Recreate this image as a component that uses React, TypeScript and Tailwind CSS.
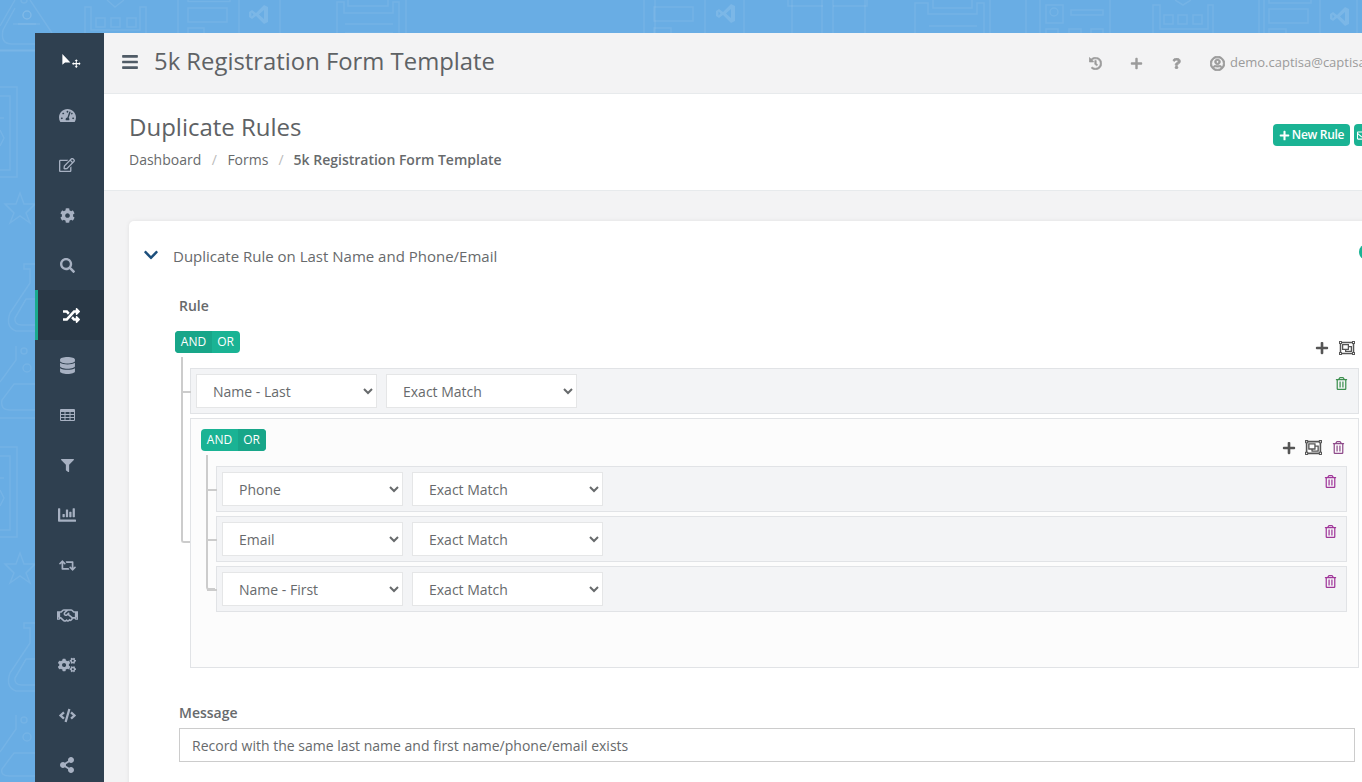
import {
  FaBars,
  FaChartBar,
  FaChevronDown,
  FaCode,
  FaCog,
  FaCogs,
  FaDatabase,
  FaFilter,
  FaHistory,
  FaPlus,
  FaQuestion,
  FaRandom,
  FaRegEdit,
  FaRegEnvelope,
  FaRegHandshake,
  FaRegObjectGroup,
  FaRegTrashAlt,
  FaRegUserCircle,
  FaRetweet,
  FaSearch,
  FaShareAlt,
  FaTachometerAlt,
} from 'react-icons/fa'

function TableIcon({ size }: { size: number }) {
  return (
    <svg width={size} height={size - 3} viewBox="0 0 15 12" fill="currentColor">
      <path
        fillRule="evenodd"
        d="M1 0 H14 Q15 0 15 1 V11 Q15 12 14 12 H1 Q0 12 0 11 V1 Q0 0 1 0 Z M1 3 V5 H4.5 V3 Z M5.5 3 V5 H9.5 V3 Z M10.5 3 V5 H14 V3 Z M1 6 V8 H4.5 V6 Z M5.5 6 V8 H9.5 V6 Z M10.5 6 V8 H14 V6 Z M1 9 V11 H4.5 V9 Z M5.5 9 V11 H9.5 V9 Z M10.5 9 V11 H14 V9 Z"
      />
    </svg>
  )
}

const navIcons = [
  { icon: FaTachometerAlt, size: 17 },
  { icon: FaRegEdit, size: 16 },
  { icon: FaCog, size: 15 },
  { icon: FaSearch, size: 15 },
  { icon: FaRandom, size: 17, active: true },
  { icon: FaDatabase, size: 17 },
  { icon: TableIcon, size: 15 },
  { icon: FaFilter, size: 13 },
  { icon: FaChartBar, size: 18 },
  { icon: FaRetweet, size: 17 },
  { icon: FaRegHandshake, size: 21 },
  { icon: FaCogs, size: 18 },
  { icon: FaCode, size: 17 },
  { icon: FaShareAlt, size: 16 },
]

function VsLogo({ x, y }: { x: number; y: number }) {
  return (
    <path
      transform={`translate(${x} ${y})`}
      fillRule="evenodd"
      d="M0 7 L3 5 L7 8 L15 0 L19 2 V17 L15 19 L7 11 L3 14 L0 12 Z M15 5 L10 9.5 L15 14 Z M2.5 7.5 V11.5 L4.5 9.5 Z"
    />
  )
}

function Backdrop() {
  return (
    <svg className="absolute inset-0" width="1362" height="782" fill="none" stroke="#ffffff" strokeOpacity="0.08" strokeWidth="1.5">
      {/* top strip */}
      <path d="M15 0 L0 26 M30 0 L52 33 M13 24 H40 M0 50 H40" />
      <circle cx="27" cy="15" r="4" />
      <circle cx="24" cy="0" r="3" />
      <path d="M85 33 V7 H91 V30 H140 V7 H146 V33" />
      <rect x="96" y="18" width="9" height="9" />
      <rect x="111" y="18" width="9" height="9" />
      <rect x="127" y="18" width="9" height="9" />
      <path d="M107 0 L115 7 L124 0" />
      <path d="M178 0 V33 M239 0 V33 M280 0 V33" />
      <path d="M188 0 V1.5 H230 V0" />
      <rect x="188" y="8" width="39" height="14" />
      <path d="M188 33 V28 H204 V33" />
      <path d="M337 33 V2 H344 V13 H393 V2 H399 V33 M406 0 V33" />
      <path d="M348 0 V6 H388 V0" />
      <path d="M345 24 H393 M345 33 H393" />
      <path d="M644 0 V33 M655 0 V33 M705 0 V33 M744 0 V33" />
      <rect x="654" y="7" width="39" height="14" />
      <path d="M654 33 V28 H671 V33" />
      <path d="M792 0 V33 M822 0 V33 M833 0 V33 M865 0 V33" />
      <path d="M788 0 V6 H823 M833 6 H867 V0" />
      <path d="M915 33 V3 H928 V14 H977 V3 H984 V33 M990 0 V33" />
      <path d="M933 0 V8 H972 V0" />
      <path d="M929 26 H977" />
      <path d="M1026 0 V33 M1040 0 V33 M1110 0 V33" />
      <rect x="1046" y="5" width="17" height="18" />
      <circle cx="1054" cy="12" r="4" />
      <rect x="1071" y="10" width="32" height="5" />
      <path d="M1046 33 V29 H1058 V33 M1069 33 V29 H1081 V33 M1091 33 V29 H1103 V33" />
      <path d="M1153 33 V5 H1160 V29 H1208 V5 H1213 V33" />
      <rect x="1164" y="15" width="9" height="9" />
      <rect x="1178" y="15" width="9" height="9" />
      <rect x="1193" y="15" width="9" height="9" />
      <path d="M1175 0 L1183 5 L1191 0" />
      <path d="M1259 0 V33 M1264 0 V33 M1320 0 V33 M1357 0 V33" />
      <path d="M1269 0 V3 H1311 V0" />
      <rect x="1269" y="9" width="39" height="14" />
      <path d="M1269 33 V29 H1286 V33" />
      {/* left strip */}
      <path d="M15 8 L3 30 Q0 44 12 44 H36 M0 51 H36 M18 24 H36" />
      <circle cx="27" cy="15" r="4" />
      <path d="M0 87 H17 V177 H0 M0 96 H10 V170 H0 M0 118 H4 M0 130 L4 138 L0 146" />
      <path d="M20 193 L24 204 H35 L26 213 L30 223 L20 216 L10 223 L14 213 L5 204 H16 Z" />
      <path d="M36 264 H24 V269 H30 V283 L10 313 Q5 327 16 331 H36 M36 299 H26 L15 318 Q14 325 22 325 H36" />
      <circle cx="24" cy="351" r="3" />
      <circle cx="27" cy="368" r="4" />
      <path d="M16 346 V360 L0 382 M36 384 H14 L2 400 Q0 410 10 410 H36 M0 418 H36" />
      <path d="M0 447 H17 V537 H0 M0 456 H10 V530 H0 M0 478 H4 M0 490 L4 498 L0 506" />
      <path d="M20 553 L24 564 H35 L26 573 L30 583 L20 576 L10 583 L14 573 L5 564 H16 Z" />
      <path d="M36 623 H24 V628 H30 V643 L10 673 Q5 687 16 691 H36 M36 659 H26 L15 678 Q14 685 22 685 H36" />
      <circle cx="24" cy="720" r="3" />
      <circle cx="27" cy="737" r="4" />
      <path d="M16 715 V729 L0 752 M36 753 H14 L2 769 Q0 776 10 776 H36" />
      {/* code logos */}
      <g fill="#ffffff" fillOpacity="0.12" stroke="none">
        <VsLogo x={249} y={5} />
        <VsLogo x={716} y={4} />
        <VsLogo x={1330} y={7} />
      </g>
    </svg>
  )
}

function Logo() {
  return (
    <svg width="20" height="15" viewBox="0 0 18 14" fill="#ffffff">
      <path d="M0 0 V10 L2.5 8 H7.5 Z" />
      <path d="M13 5 L14.5 6.5 H13.5 V8.5 H15.5 V7.5 L17 9 L15.5 10.5 V9.5 H13.5 V11.5 H14.5 L13 13 L11.5 11.5 H12.5 V9.5 H10.5 V10.5 L9 9 L10.5 7.5 V8.5 H12.5 V6.5 H11.5 Z" />
    </svg>
  )
}

function AndOr({ active }: { active: 'and' | 'or' }) {
  return (
    <div className="flex w-[65px] h-[22px] rounded-[4px] overflow-hidden text-white text-[12px] leading-[22px] bg-[#1ab394]">
      <span className={`w-[37px] text-center ${active === 'and' ? 'bg-[#18a689]' : ''}`}>AND</span>
      <span className={`w-[28px] pr-[1px] text-center ${active === 'or' ? 'bg-[#18a689]' : ''}`}>OR</span>
    </div>
  )
}

function RuleRow({ field, trashColor, inner }: { field: string; trashColor: string; inner?: boolean }) {
  return (
    <div className={`relative flex h-[46px] border border-[#e1e3e6] bg-[#f3f4f6] pt-[5px] pl-[5px] gap-[9px] ${inner ? 'w-[1131px]' : 'w-[1169px]'}`}>
      <span className="absolute -left-[10px] top-[22px] w-[10px] border-t-2 border-[#ccc]" />
      <select defaultValue={field} className="w-[181px] h-[34px] px-3 border border-[#e5e6e7] bg-white text-[14px] text-[#676a6c]">
        <option>{field}</option>
      </select>
      <select defaultValue="Exact Match" className="w-[191px] h-[34px] px-3 border border-[#e5e6e7] bg-white text-[14px] text-[#676a6c]">
        <option>Exact Match</option>
      </select>
      <FaRegTrashAlt size={13} className={`absolute top-[8px] ${inner ? 'right-[9px]' : 'right-[10px]'} ${trashColor}`} />
    </div>
  )
}

export default function App() {
  return (
    <div className="relative h-screen overflow-hidden bg-[#69ade4] pl-[35px] pt-[33px] font-['Open_Sans',sans-serif] text-[#676a6c]">
      <Backdrop />
      <div className="relative flex w-[1460px] h-[749px]">
        <nav className="flex-none w-[69px] bg-[#2f4050] text-[#a7b1c2] flex flex-col overflow-hidden">
          <div className="h-[57px] flex-none flex items-center justify-center pl-[5px]">
            <Logo />
          </div>
          {navIcons.map(({ icon: Icon, size, active }, i) => (
            <div
              key={i}
              className={`h-[50px] flex-none flex items-center justify-center ${
                active ? 'bg-[#293846] border-l-[3px] border-[#19aa8d] text-white' : 'pr-[5px]'
              }`}
            >
              <Icon size={size} />
            </div>
          ))}
        </nav>

        <main className="flex-1 bg-[#f3f3f4] overflow-hidden">
          <header className="h-[61px] flex items-center border-b border-[#e7eaec] pl-[17px] pb-[3px]">
            <FaBars size={18} className="text-[#4f5b66] mt-[1px]" />
            <h1 className="ml-[15px] text-[23.85px] text-[#5e6265] font-normal">5k Registration Form Template</h1>
            <div className="ml-[594px] mt-[3px] flex items-center text-[#9b9b9b] text-[13px]">
              <FaHistory size={13} strokeWidth={20} />
              <FaPlus size={13} className="ml-[28px]" />
              <FaQuestion size={11} strokeWidth={30} className="ml-[28px]" />
              <FaRegUserCircle size={15} strokeWidth={30} className="ml-[28px]" />
              <span className="ml-[5px] whitespace-nowrap">demo.captisa@captisa.com</span>
            </div>
          </header>

          <section className="relative h-[97px] bg-white border-b border-[#e7eaec] pl-[25px] pt-[16px]">
            <h2 className="text-[24px] leading-[33px] text-[#5e6265] font-normal">Duplicate Rules</h2>
            <div className="mt-[7px] text-[14px] leading-[20px] flex">
              <span>Dashboard</span>
              <span className="mx-[10.5px] text-[#bbb]">/</span>
              <span>Forms</span>
              <span className="mx-[10px] text-[#bbb]">/</span>
              <span className="font-semibold">5k Registration Form Template</span>
            </div>
            <div className="absolute left-[1169px] top-[30px] flex gap-[4px] text-white text-[12px]">
              <span className="flex items-center gap-[2px] h-[22px] w-[77px] justify-center rounded-[4px] bg-[#1ab394] font-semibold tracking-[-0.3px]">
                <FaPlus size={11} />
                New Rule
              </span>
              <span className="flex items-center h-[22px] w-[60px] pl-[3px] rounded-[4px] bg-[#1ab394]">
                <FaRegEnvelope size={11} />
              </span>
            </div>
          </section>

          <div className="mx-[25px] mt-[30px] h-[600px] bg-white rounded-[5px] shadow-[0_0_4px_rgba(0,0,0,0.08)] relative">
            <div className="flex items-center h-[70px] pl-[14px]">
              <FaChevronDown size={16} className="text-[#1c4f7c] -mt-[2px]" />
              <span className="ml-[14px] text-[15px]">Duplicate Rule on Last Name and Phone/Email</span>
              <span className="absolute left-[1230px] top-[23px] w-[16px] h-[16px] rounded-full bg-[#1ab394]" />
            </div>
            <div className="pl-[50px] pt-[5px] text-[14px] leading-[20px] font-semibold">Rule</div>

            <div className="relative ml-[46px] mt-[15px] w-[1184px]">
              <AndOr active="and" />
              <div className="absolute right-[4px] top-[9px] flex items-center gap-[10px] text-[#555]">
                <FaPlus size={14} />
                <FaRegObjectGroup size={16} />
              </div>
              {/* outer connector */}
              <span className="absolute left-[6px] top-[26px] w-[9px] h-[186px] border-l-2 border-b-2 border-[#ccc] rounded-bl-[3px]" />
              <div className="ml-[15px] mt-[15px] flex flex-col gap-[4px]">
                <RuleRow field="Name - Last" trashColor="text-[#3c8f4f]" />
                <div className="relative w-[1169px] h-[250px] border border-[#e1e3e6] bg-[#fcfcfc] pl-[25px] pt-[10px]">
                  <div className="-ml-[15px]">
                    <AndOr active="or" />
                  </div>
                  <div className="absolute right-[13px] top-[20px] flex items-center gap-[9px] text-[#555]">
                    <FaPlus size={14} />
                    <FaRegObjectGroup size={17} />
                    <FaRegTrashAlt size={13} className="text-[#8e4a8a] ml-[1px]" />
                  </div>
                  <span className="absolute left-[15px] top-[36px] w-[9px] h-[135px] border-l-2 border-b-2 border-[#ccc] rounded-bl-[3px]" />
                  <div className="mt-[15px] flex flex-col gap-[4px]">
                    <RuleRow inner field="Phone" trashColor="text-[#a0369a]" />
                    <RuleRow inner field="Email" trashColor="text-[#a0369a]" />
                    <RuleRow inner field="Name - First" trashColor="text-[#a0369a]" />
                  </div>
                </div>
              </div>
            </div>

            <div className="pl-[50px] mt-[35px] text-[14px] leading-[20px] font-semibold">Message</div>
            <input
              readOnly
              value="Record with the same last name and first name/phone/email exists"
              className="block ml-[50px] mt-[5px] w-[1176px] h-[34px] px-3 border border-[#ccc] bg-white text-[14px] text-[#676a6c]"
            />
          </div>
        </main>
      </div>
    </div>
  )
}
